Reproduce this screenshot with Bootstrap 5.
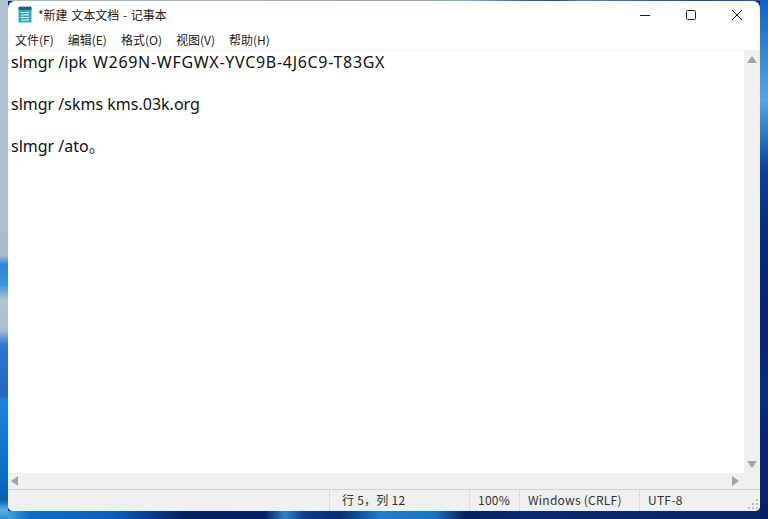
<!DOCTYPE html>
<html lang="zh">
<head>
<meta charset="utf-8">
<link href="https://cdn.jsdelivr.net/npm/bootstrap@5.3.0/dist/css/bootstrap.min.css" rel="stylesheet">
<style>
html,body{height:519px;overflow:hidden}
body{width:768px;padding:1px 8px 8px 8px;
 font-family:"Noto Sans CJK SC","Noto Sans",sans-serif;color:#1a1a1a;
 background-color:#0a2f7f;
 background-image:
  linear-gradient(180deg,#aec2d4 0,#a9bfd0 255px,#2c86dc 265px,#3f94df 285px,#b3c4d2 300px,#a8bdd0 330px,#2a78d0 345px,#2367c2 395px,#1a83dc 400px,#0c74cf 460px,#0b5fb4 500px,#58b4e6 510px,#2a89d8 519px),
  linear-gradient(180deg,#1160c8 0,#1b72cc 20px,#3f94d8 70px,#58a4dc 100px,#2779c4 135px,#0c3f98 170px,#0a2b80 230px,#0a2070 330px,#0b2c84 390px,#0a2273 440px,#0a1f66 519px),
  linear-gradient(90deg,#58b0e4 0,#0d6bcc 30px,#0a62c0 110px,#0a3f9a 145px,#07205e 185px,#082067 265px,#2e80c8 285px,#0c3a8c 305px,#0a2c74 340px,#1f7ccc 380px,#1b72c4 435px,#07205c 465px,#0a2a70 520px,#0a2464 768px),
  linear-gradient(90deg,#a7bccb 0,#8fa7b8 420px,#6fb4d4 470px,#1c63b4 530px,#1a52a8 560px,#3a8cc4 580px,#1e4ea0 700px,#1560c4 768px);
 background-size:8px 519px,8px 519px,768px 8px,768px 1px;
 background-position:0 0,760px 0,0 511px,0 0;
 background-repeat:no-repeat;}
.notepad-frame{height:510px;background:#fff;border-radius:7px 7px 5px 5px;overflow:hidden}
.titlebar{height:29px;padding-left:10px;padding-bottom:2px;flex:none}
.apptitle{font-size:12px;margin-left:6px;color:#222;flex:1;word-spacing:1px}
.winctl{width:46px;height:27px}
.menubar{height:21px;flex:none;font-size:12px;color:#222;border-bottom:1px solid #f0f0f0}
.menuitem{padding:0 7px;line-height:20px}
.editrow{height:422px;flex:none}
.editor{font-family:"Noto Sans","Noto Sans CJK SC",sans-serif;font-size:16px;line-height:21px;padding:1px 3px;color:#111;white-space:pre}
.prodkey{letter-spacing:.7px;margin-left:2px}
.vscroll{width:16px;background:#f0f0f0;padding:5px 0}
.hscroll{height:16px;flex:none;background:#f0f0f0;padding:0 21px 0 3px}
.statusline{flex:1;background:#f0f0f0;border-top:1px solid #d4d4d4;font-size:12px;color:#333;letter-spacing:.25px}
.statcell{border-left:1px solid #dcdcdc;padding-left:8px;line-height:20px;height:100%}
.cell-pos{width:140px;padding-left:12px}
.cell-zoom{width:50px}
.cell-eol{width:120px}
.cell-enc{width:121px;position:relative}
.grip{position:absolute;right:1px;bottom:1px}
</style>
</head>
<body>
<div class="notepad-frame d-flex flex-column">
  <div class="titlebar d-flex align-items-center">
    <svg width="14" height="17" viewBox="0 0 14 17"><rect x="0.5" y="1.5" width="13" height="15" fill="#2fa7c9"/><rect x="0.5" y="1" width="13" height="3" fill="#1a6f99"/><path d="M3 6.5h8M3 9h8M3 11.5h8M3 14h8" stroke="#e7f6fb" stroke-width="1"/><path d="M3 0v3M6 0v3M9 0v3M12 0v3" stroke="#27455e" stroke-width="1"/></svg>
    <span class="apptitle">*新建 文本文档 - 记事本</span>
    <div class="winctl d-flex align-items-center justify-content-center"><svg width="12" height="12" viewBox="0 0 12 12"><path d="M1 6.5h10" stroke="#222" stroke-width="1"/></svg></div>
    <div class="winctl d-flex align-items-center justify-content-center"><svg width="12" height="12" viewBox="0 0 12 12"><rect x="1.5" y="1.5" width="9" height="9" rx="1" fill="none" stroke="#222" stroke-width="1"/></svg></div>
    <div class="winctl d-flex align-items-center justify-content-center"><svg width="12" height="12" viewBox="0 0 12 12"><path d="M1 1l10 10M11 1L1 11" stroke="#222" stroke-width="1"/></svg></div>
  </div>
  <div class="menubar d-flex">
    <span class="menuitem">文件(F)</span><span class="menuitem">编辑(E)</span><span class="menuitem">格式(O)</span><span class="menuitem">视图(V)</span><span class="menuitem">帮助(H)</span>
  </div>
  <div class="editrow d-flex">
    <div class="editor flex-grow-1">slmgr /ipk <span class="prodkey">W269N-WFGWX-YVC9B-4J6C9-T83GX</span>

slmgr /skms kms.03k.org

slmgr /ato。</div>
    <div class="vscroll d-flex flex-column justify-content-between align-items-center">
      <svg width="10" height="7" viewBox="0 0 10 7"><path d="M5 0l5 7H0z" fill="#a3a3a3"/></svg>
      <svg width="10" height="7" viewBox="0 0 10 7"><path d="M0 0h10L5 7z" fill="#a3a3a3"/></svg>
    </div>
  </div>
  <div class="hscroll d-flex justify-content-between align-items-center">
    <svg width="7" height="10" viewBox="0 0 7 10"><path d="M7 0v10L0 5z" fill="#a3a3a3"/></svg>
    <svg width="7" height="10" viewBox="0 0 7 10"><path d="M0 0v10l7-5z" fill="#a3a3a3"/></svg>
  </div>
  <div class="statusline d-flex justify-content-end">
    <div class="statcell cell-pos">行 5，列 12</div>
    <div class="statcell cell-zoom">100%</div>
    <div class="statcell cell-eol">Windows (CRLF)</div>
    <div class="statcell cell-enc">UTF-8<svg class="grip" width="12" height="12" viewBox="0 0 12 12"><path d="M9 1h2v2H9zM5 5h2v2H5zM9 5h2v2H9zM1 9h2v2H1zM5 9h2v2H5zM9 9h2v2H9z" fill="#bdbdbd"/></svg></div>
  </div>
</div>
</body>
</html>
